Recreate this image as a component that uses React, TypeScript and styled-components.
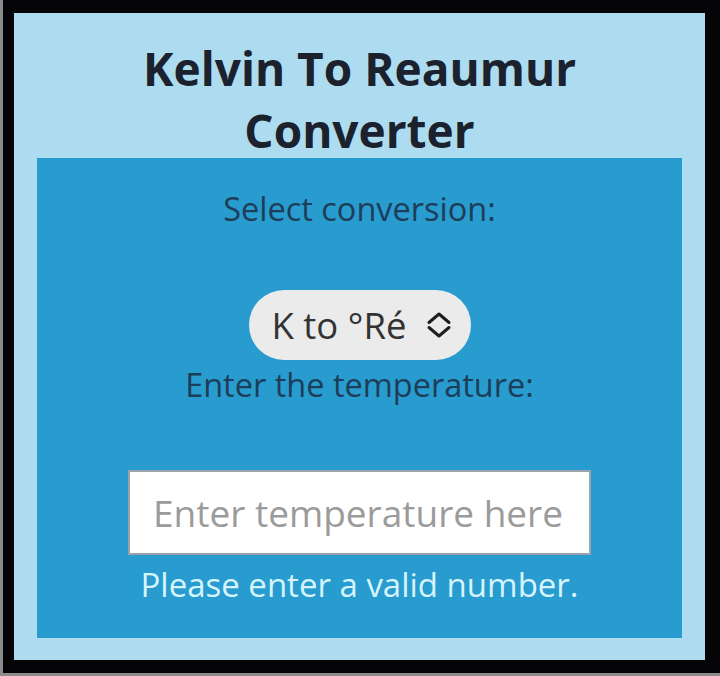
import React, { useState } from 'react';
import styled, { createGlobalStyle } from 'styled-components';

const GlobalStyle = createGlobalStyle`
	html,
	body {
		margin: 0;
		padding: 0;
		background: #8c8c8c;
	}
	body {
		font-family: 'Open Sans', 'Noto Sans', sans-serif;
	}
`;

const Frame = styled.div`
	box-sizing: border-box;
	width: 717px;
	height: 673px;
	margin-left: 3px;
	padding: 13px 15px 13px 11px;
	background: #050507;
`;

const Card = styled.div`
	box-sizing: border-box;
	height: 100%;
	padding: 24px 23px 22px;
	display: flex;
	flex-direction: column;
	background: #addcf0;
`;

const Title = styled.h1`
	margin: 0 0 -3px;
	font-size: 46px;
	line-height: 62px;
	font-weight: 700;
	text-align: center;
	color: #1b222d;
`;

const Panel = styled.div`
	flex: 1;
	display: flex;
	flex-direction: column;
	align-items: center;
	padding-top: 28px;
	background: #289bcf;
`;

const Label = styled.label<{ $gap: number }>`
	display: block;
	margin-bottom: ${(p) => p.$gap}px;
	font-size: 32.5px;
	color: #1d3d58;
`;

const SelectWrap = styled.div`
	position: relative;
	width: 222px;
	height: 70px;
	margin-bottom: 2px;
`;

const Select = styled.select`
	box-sizing: border-box;
	width: 100%;
	height: 100%;
	padding: 0 0 0 23px;
	border: none;
	border-radius: 35px;
	appearance: none;
	background: #ebebeb;
	font-family: inherit;
	font-size: 36.5px;
	color: #333;
	outline: none;
`;

const Chevron = styled.svg`
	position: absolute;
	right: 19px;
	top: 21px;
	width: 26px;
	height: 28px;
	pointer-events: none;
`;

const Input = styled.input`
	box-sizing: border-box;
	width: 463px;
	height: 85px;
	padding: 0 0 0 23px;
	border: 2px solid #9aa3ab;
	background: #fff;
	font-family: inherit;
	font-size: 37px;
	color: #333;
	outline: none;

	&::placeholder {
		color: #9b9b9b;
	}
`;

const ErrorText = styled.div`
	margin-top: 7px;
	font-size: 33px;
	color: #d6f4fb;
`;

export default function App() {
	const [mode, setMode] = useState('k-re');
	const [value, setValue] = useState('');

	return (
		<>
			<GlobalStyle />
			<Frame>
				<Card>
					<Title>
						Kelvin To Reaumur
						<br />
						Converter
					</Title>
					<Panel>
						<Label $gap={59} htmlFor="mode">
							Select conversion:
						</Label>
						<SelectWrap>
							<Select id="mode" value={mode} onChange={(e) => setMode(e.target.value)}>
								<option value="k-re">K to °Ré</option>
								<option value="re-k">°Ré to K</option>
							</Select>
							<Chevron viewBox="0 0 26 28" fill="none" stroke="#1e1e1e" strokeWidth="3" strokeLinecap="round" strokeLinejoin="round">
								<path d="M3 11.5 13 3l10 8.5" />
								<path d="M3 16.5 13 25l10-8.5" />
							</Chevron>
						</SelectWrap>
						<Label $gap={63} htmlFor="temp">
							Enter the temperature:
						</Label>
						<Input
							id="temp"
							value={value}
							placeholder="Enter temperature here"
							onChange={(e) => setValue(e.target.value)}
						/>
						<ErrorText>Please enter a valid number.</ErrorText>
					</Panel>
				</Card>
			</Frame>
		</>
	);
}
